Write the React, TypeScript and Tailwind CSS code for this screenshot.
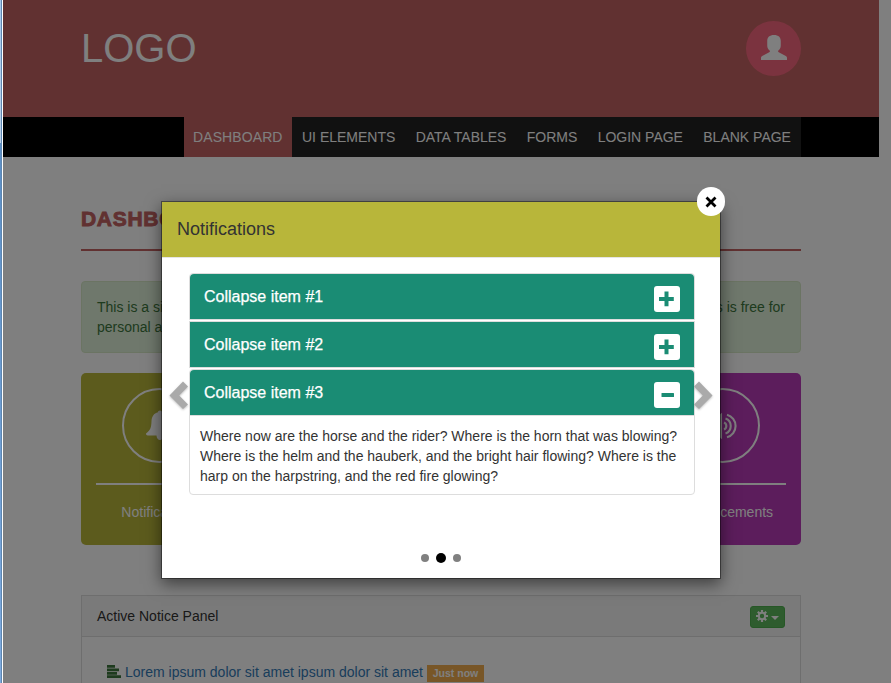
import React from "react";

const glyphUser =
  "M12.5 0C8.200 0 6 2.200 6 6v4.500c0 2.500 1 4 2.500 5.200.3.900-.1 1.400-1 1.900L1.600 20.700C.4 21.400 0 22 0 23V25h25v-2c0-1-.4-1.600-1.600-2.300L17.500 17.600c-.9-.5-1.300-1-1-1.900 1.500-1.200 2.500-2.700 2.500-5.200V6C19 2.200 16.800 0 12.500 0z";

function Nav() {
  const items = ["UI ELEMENTS", "DATA TABLES", "FORMS", "LOGIN PAGE", "BLANK PAGE"];
  return (
    <nav className="flex h-10 w-[876px] justify-end bg-black pr-[78px] text-[14px] leading-10 text-white">
      <span className="w-[108px] bg-[#c36262] pl-[9px] tracking-[0.100px]">DASHBOARD</span>
      <div className="flex w-[509px] justify-between bg-[#222] px-[10px]">
        {items.map((t) => (
          <span key={t}>{t}</span>
        ))}
      </div>
    </nav>
  );
}

function Card({ side }: { side: "left" | "right" }) {
  const left = side === "left";
  return (
    <div
      className={
        (left ? "bg-[#b8b63a]" : "bg-[#b83ab8]") +
        " flex h-[172px] w-[157px] flex-col items-center rounded-[5px] px-[15px] pt-[15px] text-white"
      }
    >
      <div className="flex size-[75px] items-center justify-center rounded-full border-2 border-white">
        {left ? (
          <svg width="32" height="32" viewBox="0 0 32 32" fill="white">
            <path d="M16 0.500c-1.300 0-2 .8-2 1.800C9.700 3.200 7.700 7 7.500 11c-.2 6.500-1 9-5.500 12.500 0 1.200.6 2 1.800 2h8.700c.2 2.800 1.600 4.500 3.500 4.500s3.300-1.700 3.500-4.500h8.700c1.200 0 1.800-.8 1.800-2-4.500-3.500-5.300-6-5.500-12.500C24.300 7 22.300 3.200 18 2.300c0-1-.7-1.800-2-1.800z" />
          </svg>
        ) : (
          <svg width="32" height="30" viewBox="0 0 32 30" fill="none" stroke="white" strokeWidth="2.100">
            <path d="M1 10h6l7-6v22l-7-6H1z" fill="white" />
            <path d="M17 11.500a3.800 3.800 0 0 1 0 7M18.500 7.500a8 8 0 0 1 0 15M20 3.800a11.600 11.600 0 0 1 0 22.400" />
          </svg>
        )}
      </div>
      <div className="mt-5 h-0.5 w-full bg-white" />
      <div className="mt-4 whitespace-nowrap">{left ? "Notifications" : "Announcements"}</div>
    </div>
  );
}

function Item({ n, open }: { n: number; open?: boolean }) {
  return (
    <div
      className={
        (n === 2 ? "" : "rounded-t ") +
        "flex h-[45px] justify-between bg-[#1a8c74] pr-[14px] pl-[14px] text-[16px] text-white"
      }
    >
      <span className="pt-[11px] leading-6 [-webkit-text-stroke:0.25px_white]">Collapse item #{n}</span>
      <span className="mt-3 flex size-[26px] items-center justify-center rounded-[3px] bg-white">
        <svg width="26" height="26" viewBox="0 0 26 26" fill="#1a8c74">
          {open ? (
            <rect x="7.500" y="11" width="12.500" height="4" rx="0.500" />
          ) : (
            <path d="M10.500 5.500h4v5.500h5.300v4h-5.300v5.200h-4V15H5v-4h5.500z" />
          )}
        </svg>
      </span>
    </div>
  );
}

function Arrow({ flip }: { flip?: boolean }) {
  return (
    <svg
      width="20"
      height="30"
      viewBox="0 0 20 30"
      className={(flip ? "-scale-x-100 " : "") + "block drop-shadow-[0_1px_1px_rgba(0,0,0,0.25)]"}
    >
      <path d="M14 0.500l5 5-8.800 9 8.800 9-5 4.500L0.500 14.500z" fill="#aaa" />
    </svg>
  );
}

function Modal() {
  return (
    <section className="absolute top-[201px] left-[161px] h-[378px] w-[560px] border border-black/40 bg-white bg-clip-padding shadow-[0_5px_15px_rgba(0,0,0,0.5)]">
      <header className="h-14 border-b border-[#e5e5e5] bg-[#b8b63a] pl-[15px] text-[18px] leading-[55px] text-[#333]">
        Notifications
      </header>
      <div className="mt-[15px] ml-[27px] w-[506px]">
        <div className="rounded-t border border-[#ddd]">
          <Item n={1} />
        </div>
        <div className="mt-px border border-[#ddd]">
          <Item n={2} />
        </div>
        <div className="mt-px rounded border border-[#ddd]">
          <Item n={3} open />
          <p className="h-[79px] border-t border-[#ddd] pt-[10px] pl-[10px] text-[14px] leading-5 whitespace-nowrap text-[#333]">
            Where now are the horse and the rider? Where is the horn that was blowing?
            <br />
            Where is the helm and the hauberk, and the bright hair flowing? Where is the
            <br />
            harp on the harpstring, and the red fire glowing?
          </p>
        </div>
      </div>
      <div className="mt-[58px] flex items-center justify-center gap-[7px]">
        <i className="size-2 rounded-full bg-[#808080]" />
        <i className="size-[10px] rounded-full bg-black" />
        <i className="size-2 rounded-full bg-[#808080]" />
      </div>
      <div className="absolute top-[179px] left-[7px]">
        <Arrow />
      </div>
      <div className="absolute top-[179px] left-[531px]">
        <Arrow flip />
      </div>
      <button className="absolute -top-[15px] left-[535px] flex h-[29px] w-7 items-center justify-center rounded-full bg-white">
        <svg width="12" height="12" viewBox="0 0 12 12" stroke="black" strokeWidth="2.800">
          <path d="M1.500 1.500l9 9M10.500 1.500l-9 9" />
        </svg>
      </button>
    </section>
  );
}

export default function App() {
  return (
    <div className="relative flex h-[683px] w-[891px] overflow-hidden bg-white font-['Liberation_Sans',Arial,sans-serif] text-[14px] leading-5 text-[#333]">
      <div className="relative z-10 flex h-full w-[3px] shrink-0 border-r border-white">
        <div className="flex w-px flex-col">
          <div className="h-[143px] bg-linear-to-b from-[#a3c6ea] to-[#b9cfe6]" />
          <div className="flex-1 bg-linear-to-b from-[#5c8fc6] to-[#7fabdf]" />
        </div>
        <div className="w-px bg-[#5d86b0]" />
      </div>
      <main className="w-[888px]">
        <header className="flex h-[117px] w-[876px] justify-between bg-[#c36262] px-[78px] text-white">
          <span className="mt-[20px] text-[40px] leading-[56px]">LOGO</span>
          <span className="mt-[21px] flex size-[55px] items-center justify-center rounded-full bg-[#f7677f]">
            <svg width="26" height="25" viewBox="0 0 25 25" preserveAspectRatio="none" fill="white" className="mb-0.5">
              <path d={glyphUser} />
            </svg>
          </span>
        </header>
        <Nav />
        <div className="ml-[78px] w-[720px]">
          <h1 className="mt-[46px] h-[48px] border-b-2 border-[#c36262] text-[21px] leading-[31px] font-black tracking-[0.700px] text-[#c36262] [-webkit-text-stroke:0.900px_#c36262]">
            DASHBOARD
          </h1>
          <div className="mt-[30px] h-[72px] rounded border border-[#d6e9c6] bg-[#dff0d8] px-[15px] pt-[15px] text-[#3c763d]">
            <div className="flex justify-between">
              <span>This is a simple admin template.</span>
              <span>This is free for</span>
            </div>
            <div>personal and commercial use.</div>
          </div>
          <div className="mt-5 flex justify-between leading-[22px]">
            <Card side="left" />
            <Card side="right" />
          </div>
          <section className="mt-[50px] h-[120px] border border-[#ddd]">
            <header className="flex h-[41px] items-center justify-between border-b border-[#ddd] bg-[#f5f5f5] px-[15px]">
              <span>Active Notice Panel</span>
              <span className="mt-px flex h-[22px] w-[35px] items-center justify-center gap-1 rounded-[3px] border border-[#4cae4c] bg-[#5cb85c]">
                <svg width="12" height="12" viewBox="0 0 12 12" stroke="white" fill="none" className="-mt-0.5">
                  <circle cx="6" cy="6" r="3.200" strokeWidth="2" />
                  <path
                    d="M6 0v2.500M6 9.500V12M0 6h2.500M9.500 6H12M1.800 1.800l1.700 1.700M8.500 8.500l1.700 1.700M1.800 10.200l1.700-1.700M8.500 3.500l1.700-1.700"
                    strokeWidth="2.200"
                  />
                </svg>
                <i className="mt-[3px] -ml-px border-x-4 border-t-4 border-x-transparent border-t-white" />
              </span>
            </header>
            <div className="flex items-center pt-[25px] pl-[25px]">
              <svg width="14" height="13" viewBox="0 0 14 13" fill="#3c763d" className="-mt-0.5">
                <path d="M0 0h8v2.700H0zM0 3.500h12V6.200H0zM0 7h10v2.700H0zM0 10.300h14V13H0z" />
              </svg>
              <span className="ml-[4px] text-[#337ab7]">Lorem ipsum dolor sit amet ipsum dolor sit amet</span>
              <b className="mt-[3px] ml-1 h-[17px] w-[57px] bg-[#f0ad4e] text-center text-[10.500px] leading-[17px] text-white">
                Just now
              </b>
            </div>
          </section>
        </div>
      </main>
      <div className="absolute inset-y-0 right-0 left-[3px] bg-black/50" />
      <Modal />
    </div>
  );
}
